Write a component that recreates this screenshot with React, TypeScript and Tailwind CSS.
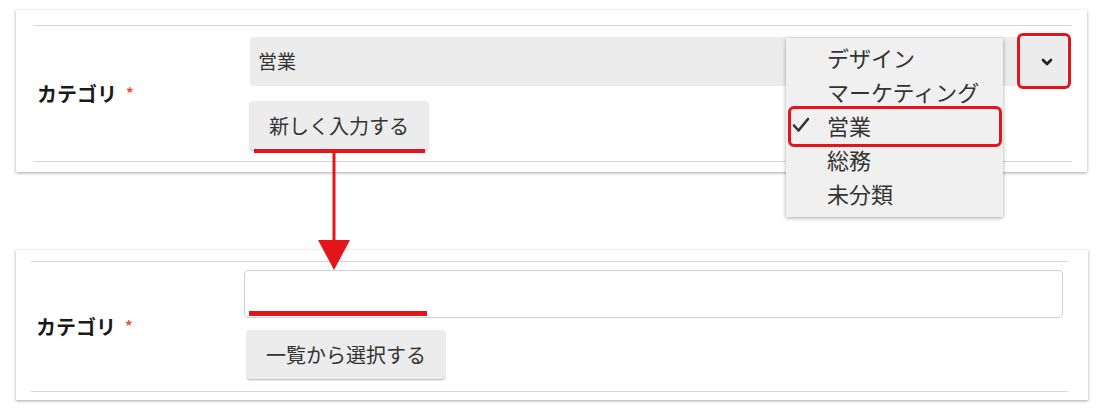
const FONT = "font-['Noto_Sans_CJK_JP','Noto_Sans',sans-serif]";

const OPTIONS = ["デザイン", "マーケティング", "営業", "総務", "未分類"];

function Label() {
  return (
    <span className="text-[20px] font-bold text-[#1a1a1a] leading-none">
      カテゴリ
      <span className="ml-[9px] text-[15px] text-[#e5533d] align-[3px]">*</span>
    </span>
  );
}

function Chevron() {
  return (
    <svg width="12" height="8" viewBox="0 0 12 8" fill="none" stroke="#222" strokeWidth="2.6" strokeLinecap="round" strokeLinejoin="round">
      <path d="M2 2l4 4 4-4" />
    </svg>
  );
}

function Check() {
  return (
    <svg width="18" height="16" viewBox="0 0 18 16" fill="none" stroke="#333" strokeWidth="2.6" strokeLinecap="round" strokeLinejoin="round">
      <path d="M2 8.5l4.5 5L16 2" />
    </svg>
  );
}

export default function App() {
  return (
    <div className={`relative w-[1111px] h-[413px] bg-white pt-[10px] ${FONT}`}>
      {/* select mode */}
      <div className="ml-[16px] w-[1071px] h-[162px] bg-white shadow-[0_1px_3px_rgba(0,0,0,0.35)] pt-[15px] pl-[17px] pr-[15px]">
        <div className="h-[137px] border-y border-[#d6d6d6] flex">
          <div className="w-[217px] pl-[4px] flex items-center">
            <Label />
          </div>
          <div className="flex-1 flex flex-col gap-[15px] pt-[11px] pr-[5px]">
            <div className="h-[49px] bg-[#ececec] rounded-[3px] flex items-center justify-between pl-[8px] pr-[14px]">
              <span className="text-[19px] text-[#333]">営業</span>
              <Chevron />
            </div>
            <button className="w-[178px] h-[49px] bg-[#ececec] rounded-[3px] shadow-[0_1px_2px_rgba(0,0,0,0.3)] text-[20px] text-[#333]">
              新しく入力する
            </button>
          </div>
        </div>
      </div>

      {/* input mode */}
      <div className="mt-[78px] ml-[16px] w-[1072px] h-[150px] bg-white shadow-[0_1px_3px_rgba(0,0,0,0.35)] pt-[11px] pl-[15px] pr-[20px]">
        <div className="h-[131px] border-y border-[#d6d6d6] flex">
          <div className="w-[213px] pl-[5px] flex items-center">
            <Label />
          </div>
          <div className="flex-1 flex flex-col gap-[12px] pt-[8px] pr-[5px]">
            <input className="h-[48px] bg-white border border-[#cfcfcf] rounded-[4px] outline-none" />
            <button className="ml-[3px] w-[198px] h-[49px] bg-[#ececec] rounded-[3px] shadow-[0_1px_2px_rgba(0,0,0,0.3)] text-[20px] text-[#333]">
              一覧から選択する
            </button>
          </div>
        </div>
      </div>

      {/* dropdown menu */}
      <div className="absolute left-[786px] top-[38px] w-[217px] h-[179px] bg-[#f0f0f0] shadow-[0_1px_4px_rgba(0,0,0,0.35)] pt-[2px]">
        {OPTIONS.map((o) => (
          <div key={o} className="h-[34px] flex items-center text-[22px] text-[#333]">
            <span className="w-[41px] pl-[6px] flex items-center">{o === "営業" && <Check />}</span>
            {o}
          </div>
        ))}
      </div>

      {/* annotations */}
      <div className="absolute left-[788px] top-[106px] w-[214px] h-[41px] border-[3px] border-[#e3151a] rounded-[6px]" />
      <div className="absolute left-[1017px] top-[33px] w-[54px] h-[56px] border-[3px] border-[#e3151a] rounded-[6px]" />
      <div className="absolute left-[254px] top-[149px] w-[171px] h-[4px] bg-[#e3151a]" />
      <div className="absolute left-[249px] top-[311px] w-[178px] h-[5px] bg-[#e3151a]" />
      <svg className="absolute left-[316px] top-[151px]" width="36" height="122" viewBox="0 0 36 122">
        <path d="M18 0V92" stroke="#e3151a" strokeWidth="3" />
        <polygon points="2,89 34,89 18,119" fill="#e3151a" />
      </svg>
    </div>
  );
}
